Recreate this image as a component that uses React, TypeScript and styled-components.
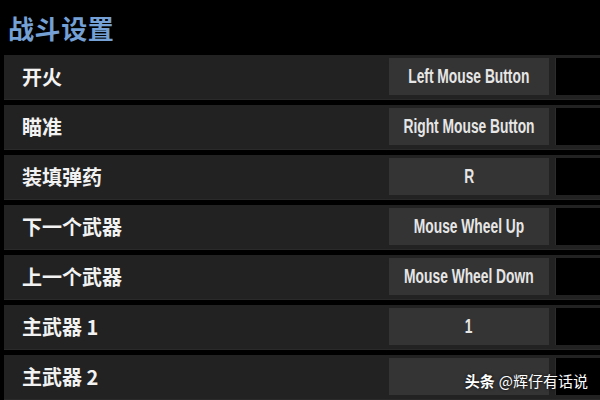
import React from 'react';
import styled, { createGlobalStyle } from 'styled-components';

interface Binding {
  action: string;
  key: string;
}

const bindings: Binding[] = [
  { action: '开火', key: 'Left Mouse Button' },
  { action: '瞄准', key: 'Right Mouse Button' },
  { action: '装填弹药', key: 'R' },
  { action: '下一个武器', key: 'Mouse Wheel Up' },
  { action: '上一个武器', key: 'Mouse Wheel Down' },
  { action: '主武器 1', key: '1' },
  { action: '主武器 2', key: '' },
];

const GlobalStyle = createGlobalStyle`
  html, body {
    margin: 0;
    padding: 0;
    background: #000;
  }
`;

const Screen = styled.div`
  width: 600px;
  height: 400px;
  overflow: hidden;
  background: #000;
  position: relative;
  font-family: 'Noto Sans CJK SC', 'Noto Sans', sans-serif;
`;

const Title = styled.h1`
  margin: 0;
  height: 55px;
  padding-left: 8px;
  display: flex;
  align-items: center;
  font-size: 26px;
  font-weight: 700;
  color: #74a0d6;
  letter-spacing: 0.6px;
`;

const List = styled.div`
  display: flex;
  flex-direction: column;
  gap: 5px;
  padding-left: 4px;
`;

const Row = styled.div`
  box-sizing: border-box;
  display: flex;
  align-items: stretch;
  height: 45px;
  padding: 3px 0 4px;
  background: #222222;
  border-bottom: 1px solid #2a2a2a;
`;

const Label = styled.div`
  flex: 1;
  display: flex;
  align-items: center;
  padding-left: 18px;
  font-size: 20px;
  font-weight: 700;
  color: #f2f2f2;
`;

const KeyButton = styled.div`
  width: 160px;
  display: flex;
  align-items: center;
  justify-content: center;
  background: #343434;
  color: #e6e6e6;
`;

// narrow, tall lettering for key names
const KeyText = styled.span`
  display: inline-block;
  white-space: nowrap;
  font-family: 'Liberation Sans', Arial, sans-serif;
  font-weight: 700;
  font-size: 20px;
  transform: scaleX(0.69);
`;

const AltSlot = styled.div`
  width: 44px;
  margin-left: 6px;
  background: #000;
  border-left: 1px solid #2c2c2c;
`;

const Watermark = styled.div`
  position: absolute;
  right: 12px;
  bottom: 9px;
  color: #fff;
  font-size: 15px;
  text-shadow: 0 0 3px rgba(0, 0, 0, 0.9);
  b {
    font-weight: 700;
    margin-right: 4px;
  }
`;

const App: React.FC = () => {
  return (
    <Screen>
      <GlobalStyle />
      <Title>战斗设置</Title>
      <List>
        {bindings.map((b) => (
          <Row key={b.action}>
            <Label>{b.action}</Label>
            <KeyButton>{b.key && <KeyText>{b.key}</KeyText>}</KeyButton>
            <AltSlot />
          </Row>
        ))}
      </List>
      <Watermark>
        <b>头条</b>@辉仔有话说
      </Watermark>
    </Screen>
  );
};

export default App;
